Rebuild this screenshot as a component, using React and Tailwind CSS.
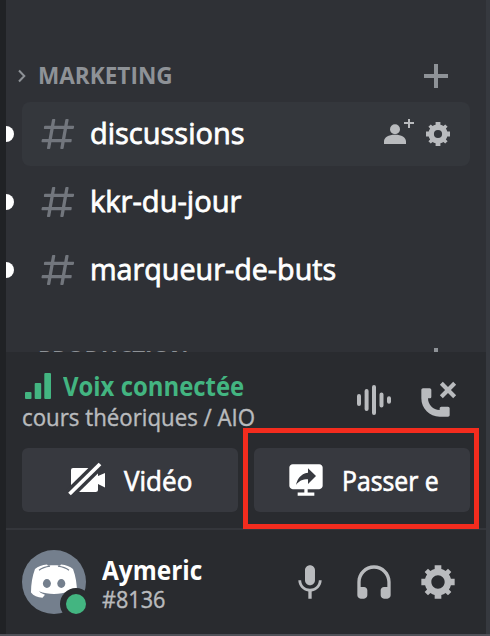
import React from "react";

const HASH =
  "M5.88657 21C5.57547 21 5.3399 20.7189 5.39427 20.4126L6.00001 17H2.59511C2.28449 17 2.04905 16.7198 2.10259 16.4138L2.27759 15.4138C2.31946 15.1746 2.52722 15 2.77011 15H6.35001L7.41001 9H4.00511C3.69449 9 3.45905 8.71977 3.51259 8.41381L3.68759 7.41381C3.72946 7.17456 3.93722 7 4.18011 7H7.76001L8.39677 3.41262C8.43914 3.17391 8.64664 3 8.88907 3H9.87344C10.1845 3 10.4201 3.28107 10.3657 3.58738L9.76001 7H15.76L16.3968 3.41262C16.4391 3.17391 16.6466 3 16.8891 3H17.8734C18.1845 3 18.4201 3.28107 18.3657 3.58738L17.76 7H21.1649C21.4755 7 21.711 7.28023 21.6574 7.58619L21.4824 8.58619C21.4406 8.82544 21.2328 9 20.9899 9H17.41L16.35 15H19.7549C20.0655 15 20.301 15.2802 20.2474 15.5862L20.0724 16.5862C20.0306 16.8254 19.8228 17 19.5799 17H16L15.3632 20.5874C15.3209 20.8261 15.1134 21 14.8709 21H13.8866C13.5755 21 13.3399 20.7189 13.3943 20.4126L14 17H8.00001L7.36325 20.5874C7.32088 20.8261 7.11337 21 6.87094 21H5.88657ZM9.41045 9L8.35045 15H14.3504L15.4104 9H9.41045Z";
const GEAR =
  "M19.738 10H22V14H19.739C19.498 14.931 19.1 15.798 18.565 16.564L20 18L18 20L16.565 18.564C15.797 19.099 14.932 19.498 14 19.738V22H10V19.738C9.069 19.498 8.203 19.099 7.436 18.564L6 20L4 18L5.436 16.564C4.901 15.799 4.502 14.932 4.262 14H2V10H4.262C4.502 9.068 4.9 8.202 5.436 7.436L4 6L6 4L7.436 5.436C8.202 4.9 9.068 4.502 10 4.262V2H14V4.261C14.932 4.502 15.797 4.9 16.565 5.435L18 3.999L20 5.999L18.564 7.436C19.099 8.202 19.498 9.069 19.738 10ZM12 16C14.2091 16 16 14.2091 16 12C16 9.79086 14.2091 8 12 8C9.79086 8 8 9.79086 8 12C8 14.2091 9.79086 16 12 16Z";
const MIC =
  "M14.99 11C14.99 12.66 13.66 14 12 14C10.34 14 9 12.66 9 11V5C9 3.34 10.34 2 12 2C13.66 2 15 3.34 15 5L14.99 11ZM12 16.1C14.76 16.1 17.3 14 17.3 11H19C19 14.42 16.28 17.24 13 17.72V22H11V17.72C7.72 17.23 5 14.41 5 11H6.7C6.7 14 9.24 16.1 12 16.1Z";
const HEADPHONES =
  "M12 2.00305C6.486 2.00305 2 6.48805 2 12.0031V20.0031C2 21.1071 2.895 22.0031 4 22.0031H6C7.104 22.0031 8 21.1071 8 20.0031V17.0031C8 15.8991 7.104 15.0031 6 15.0031H4V12.0031C4 7.59105 7.589 4.00305 12 4.00305C16.411 4.00305 20 7.59105 20 12.0031V15.0031H18C16.896 15.0031 16 15.8991 16 17.0031V20.0031C16 21.1071 16.896 22.0031 18 22.0031H20C21.104 22.0031 22 21.1071 22 20.0031V12.0031C22 6.48805 17.514 2.00305 12 2.00305Z";
const HANGUP =
  "M21.1169 1.11603L22.8839 2.88403L19.7679 6.00003L22.8839 9.11603L21.1169 10.884L17.9999 7.76803L14.8839 10.884L13.1169 9.11603L16.2329 6.00003L13.1169 2.88403L14.8839 1.11603L17.9999 4.23203L21.1169 1.11603ZM18 22H13C6.925 22 2 17.075 2 11V6C2 5.447 2.448 5 3 5H7C7.553 5 8 5.447 8 6V10C8 10.553 7.553 11 7 11H6C6.063 14.938 9 18 13 18V17C13 16.447 13.447 16 14 16H18C18.553 16 19 16.447 19 17V21C19 21.553 18.553 22 18 22Z";
const SCREEN =
  "M2 4.5C2 3.397 2.897 2.5 4 2.5H20C21.103 2.5 22 3.397 22 4.5V15.5C22 16.604 21.103 17.5 20 17.5H13V19.5H17V21.5H7V19.5H11V17.5H4C2.897 17.5 2 16.604 2 15.5V4.5ZM13.2 14.3375V11.6C9.864 11.6 7.668 12.6625 6 15C6.672 11.6625 8.532 8.3375 13.2 7.6625V5L18 9.6625L13.2 14.3375Z";

function Icon({ d, className }) {
  return (
    <svg viewBox="0 0 24 24" className={`shrink-0 ${className}`} fill="currentColor" fillRule="evenodd" clipRule="evenodd">
      <path d={d} />
    </svg>
  );
}

function Plus() {
  return (
    <svg viewBox="0 0 24 24" className="size-6 shrink-0 text-[#8e9297]" fill="currentColor">
      <path d="M10 0h4v10h10v4H14v10h-4V14H0v-4h10z" />
    </svg>
  );
}

function Channel({ name, fit, active }) {
  return (
    <div className="flex h-16 items-center">
      <div className="h-4 w-2 shrink-0 rounded-r-full bg-white" />
      <div className={`ml-2 flex h-16 w-[448px] items-center rounded-lg pl-4 ${active ? "bg-[#34373c]" : ""}`}>
        <Icon d={HASH} className="size-10 text-[#72767d]" />
        <span className={`mb-0.5 ml-3 flex-1 origin-left whitespace-nowrap text-[30px] leading-10 text-white [-webkit-text-stroke:0.8px_white] ${fit}`}>{name}</span>
        {active && (
          <div className="flex items-center pr-5 text-[#b9bbbe]">
            <svg viewBox="0 0 30 28" className="mb-0.5 mr-3 h-7 w-[30px]" fill="currentColor">
              <circle cx="11" cy="10.200" r="5" />
              <path d="M0 25v-2.500c0-4 4.500-6.700 11-6.700s11 2.700 11 6.700V25zM24 -1h2v4h4v2h-4v4h-2V5h-4V3h4z" />
            </svg>
            <svg viewBox="2 2 20 20" className="size-6" fill="currentColor" fillRule="evenodd">
              <path d={GEAR} />
              <circle cx="12" cy="12" r="5.400" fill="none" stroke="currentColor" strokeWidth="4" />
            </svg>
          </div>
        )}
      </div>
    </div>
  );
}

export default function App() {
  return (
    <div className="relative flex h-[636px] w-[490px] flex-col overflow-hidden bg-[#4f5058] font-['Open_Sans','Noto_Sans',sans-serif]">
      <div className="flex h-[634px]">
        <div className="w-1.5 shrink-0 bg-[#202225]" />
        <div className="flex w-[480px] shrink-0 flex-col bg-[#2f3136]">
          <div className="flex h-[352px] flex-col overflow-hidden">
            <div className="mt-[50px] flex h-[52px] shrink-0 items-center pl-3 pr-[38px] text-[#8e9297]">
              <svg viewBox="0 0 8 14" className="h-3.5 w-2" fill="none" stroke="currentColor" strokeWidth="2">
                <path d="M1 1.5l5.3 5.5L1 12.500" />
              </svg>
              <span className="mb-0.5 ml-3 flex-1 origin-left whitespace-nowrap text-2xl font-bold scale-x-[0.94]">MARKETING</span>
              <Plus />
            </div>
            <div className="flex shrink-0 flex-col gap-1">
              <Channel name="discussions" fit="scale-x-[0.966]" active />
              <Channel name="kkr-du-jour" fit="scale-x-[0.97]" />
              <Channel name="marqueur-de-buts" fit="scale-x-[0.957]" />
            </div>
            <div className="mt-[34px] flex h-[52px] shrink-0 items-start pl-8 pr-[38px] pt-3 text-[#8e9297]">
              <span className="-mt-[3px] flex-1 origin-left whitespace-nowrap text-2xl font-bold leading-7 scale-x-[0.93]">PRODUCTION</span>
              <Plus />
            </div>
          </div>

          <div className="flex h-44 flex-col bg-[#292b2f] pl-4">
            <div className="flex h-24 items-start text-[#b9bbbe]">
              <div className="flex w-[332px] flex-col pt-[18px]">
                <div className="flex h-8 items-center text-[#43b581]">
                  <svg viewBox="0 0 26 26" className="ml-[3px] size-[26px] shrink-0" fill="currentColor">
                    <rect y="19" width="6.500" height="7" rx="1" />
                    <rect x="9.700" y="10" width="6.500" height="16" rx="1" />
                    <rect x="19.300" width="6.700" height="26" rx="1" />
                  </svg>
                  <span className="ml-3 origin-left whitespace-nowrap text-[27px] font-bold leading-8 scale-x-[0.885]">Voix connectée</span>
                </div>
                <span className="-mt-px origin-left whitespace-nowrap text-[23px] leading-8 [-webkit-text-stroke:0.4px_#b9bbbe] scale-x-[0.968]">cours théoriques / AIO</span>
              </div>
              <svg viewBox="0 0 40 40" className="mt-7 size-10 shrink-0" stroke="currentColor" strokeWidth="4" strokeLinecap="round">
                <path d="M5 16v8M12.600 11v18M20 7v26M27.500 14.500v11M35 18.200v3.600" />
              </svg>
              <Icon d={HANGUP} className="ml-6 mt-7 size-10" />
            </div>
            <div className="flex gap-4 text-[28px] text-white [-webkit-text-stroke:0.7px_white]">
              <div className="flex h-16 w-[216px] items-center rounded-md bg-[#37393f] pl-[44px]">
                <svg viewBox="0 0 40 40" className="size-10 shrink-0">
                  <path fill="#fff" d="M5 10a2 2 0 0 1 2-2h22.500a2.500 2.500 0 0 1 2.500 2.500v5.500l7-3v14.500l-7-3.500v5.500a2.500 2.500 0 0 1-2.500 2.500H7.500A2.500 2.500 0 0 1 5 29.500z" />
                  <path stroke="#37393f" strokeWidth="10.500" d="M1 36.500L37 1" />
                  <path stroke="#fff" strokeWidth="3.800" d="M3.500 34L34 4" />
                </svg>
                <span className="ml-[18px] origin-left scale-x-[0.93]">Vidéo</span>
              </div>
              <div className="flex h-16 w-[216px] items-center rounded-md bg-[#37393f] pl-8">
                <Icon d={SCREEN} className="size-10" />
                <span className="ml-4 origin-left whitespace-nowrap scale-x-[0.885]">Passer e</span>
              </div>
            </div>
          </div>

          <div className="flex h-[106px] items-center border-t-2 border-[#34363b] bg-[#292b2f] pl-4 text-[#b9bbbe]">
            <svg viewBox="0 0 68 68" className="size-[68px] shrink-0">
              <circle cx="32" cy="34" r="32" fill="#747f8d" />
              <path
                fill="#fff"
                d="M25 16.500C20 17 16 18.300 13 21C10.300 28 9 36 9 44.500C11.500 48 15.500 49.500 20.500 49.800L23 46.800C20.500 46 18.500 45 17 43.300C26 46.800 38 46.800 47 43.300C45.500 45 43.500 46 41 46.800L43.500 49.800C48.500 49.500 52.500 48 55 44.500C55 36 53.700 28 51 21C48 18.300 44 17 39 16.500L38 17.800C34 17.200 30 17.200 26 17.800Z"
              />
              <path d="M17 22.300C20 20 23 18.900 28 18.200M47 22.300C44 20 41 18.900 36 18.200" stroke="#747f8d" strokeWidth="1.200" fill="none" />
              <ellipse cx="24.900" cy="35.500" rx="4" ry="4.400" fill="#747f8d" />
              <ellipse cx="39.300" cy="35.500" rx="4" ry="4.400" fill="#747f8d" />
              <circle cx="54" cy="56" r="16" fill="#292b2f" />
              <circle cx="54" cy="56" r="10" fill="#43b581" />
            </svg>
            <div className="ml-3 mt-1 flex w-[188px] flex-col">
              <span className="origin-left text-[26px] font-bold leading-[30px] text-white scale-x-[0.94]">Aymeric</span>
              <span className="origin-left text-[23px] leading-7 [-webkit-text-stroke:0.4px_#b9bbbe] scale-x-[0.94]">#8136</span>
            </div>
            <div className="flex gap-6">
              <Icon d={MIC} className="size-10" />
              <Icon d={HEADPHONES} className="size-10" />
              <Icon d={GEAR} className="size-10" />
            </div>
          </div>
        </div>
        <div className="w-1 shrink-0 bg-[#36393f]" />
      </div>
      <div className="absolute left-[243px] top-[428px] h-[101px] w-[236px] border-[5px] border-[#f32c1e]" />
    </div>
  );
}
